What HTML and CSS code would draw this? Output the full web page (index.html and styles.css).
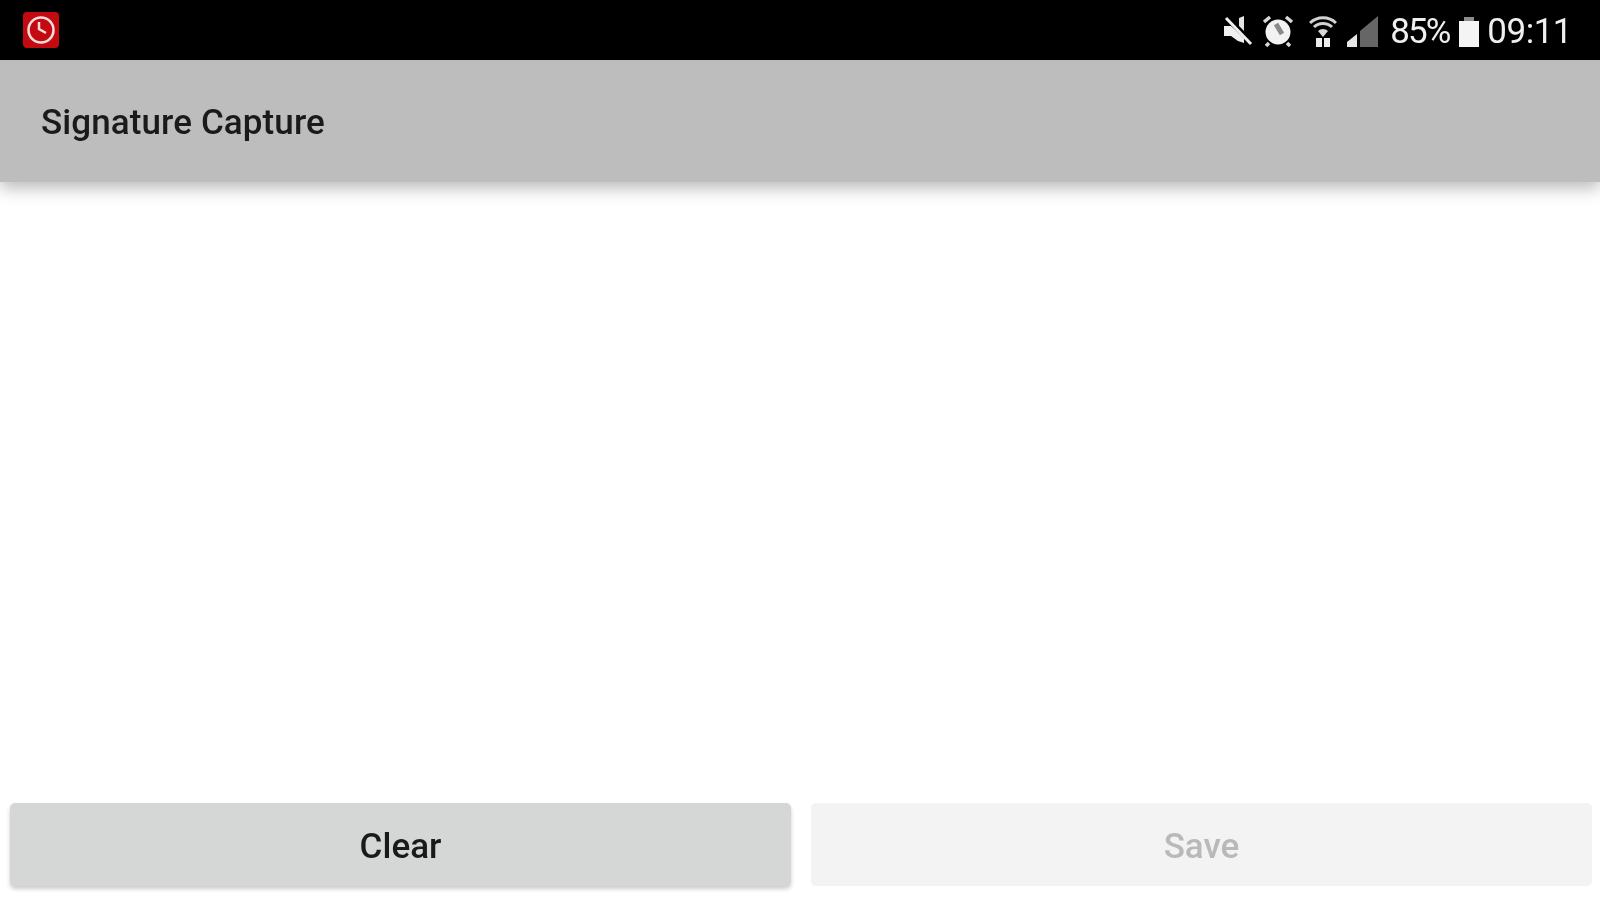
FILE: index.html
```html
<!DOCTYPE html>
<html lang="en">
<head>
  <meta charset="UTF-8" />
  <meta name="viewport" content="width=device-width, initial-scale=1.0"/>
  <title>Signature Capture</title>
  <link rel="stylesheet" href="styles.css">
</head>
<body>

<div class="screen">
  <div class="status-bar">
    <svg class="app-icon" width="36" height="36" viewBox="0 0 36 36">
      <rect width="36" height="36" rx="4" fill="#c30a10"/>
      <circle cx="18" cy="18" r="12.5" fill="none" stroke="#f6dcdc" stroke-width="2.5"/>
      <path d="M16 10v7l7 4" fill="none" stroke="#f6dcdc" stroke-width="2.5"/>
    </svg>

    <div class="status-icons">
      <svg class="icon-mute" width="30" height="32" viewBox="0 0 30 32">
        <path d="M1 11h7l6 5 7 7v5l-6-2-7-5H1z" fill="#f0f0f0"/>
        <path d="M16 3v8l5 5V1z" fill="#e4e4e4"/>
        <path d="M3 2l26 26" stroke="#000" stroke-width="5"/>
        <path d="M3 3l25 26" stroke="#f0f0f0" stroke-width="3"/>
      </svg>
      <svg class="icon-alarm" width="32" height="32" viewBox="0 0 32 32">
        <circle cx="16" cy="17" r="12.5" fill="#f2f2f2"/>
        <path d="M14 9l6 10" stroke="#8a8a8a" stroke-width="5"/>
        <path d="M2 7l6-5M30 7l-6-5M7 28l-3 3M25 28l3 3" stroke="#d8d8d8" stroke-width="3.5"/>
      </svg>
      <svg class="icon-wifi" width="28" height="32" viewBox="0 0 28 32">
        <path d="M1 8a19 19 0 0 1 26 0M5 12a13 13 0 0 1 18 0" fill="none" stroke="#d2d2d2" stroke-width="3"/>
        <path d="M9 16a7 7 0 0 1 10 0l-5 6z" fill="#d8d8d8"/>
        <path d="M7 23h6v9H7zM15 23h6v9h-6z" fill="#ececec"/>
      </svg>
      <svg class="icon-signal" width="32" height="32" viewBox="0 0 32 32">
        <path d="M32 1v31H14V16z" fill="#666"/>
        <path d="M1 32v-5l10-8v13z" fill="#e6e6e6"/>
      </svg>
      <span class="status-text battery-level">85%</span>
      <div class="battery">
        <div class="battery-cap"></div>
        <div class="battery-body"></div>
      </div>
      <span class="status-text">09:11</span>
    </div>
  </div>

  <div class="app-bar">
    <h1>Signature Capture</h1>
  </div>

  <div class="signature-area"></div>

  <div class="buttons">
    <button type="button" class="btn-clear"><span>Clear</span></button>
    <button type="button" class="btn-save" disabled><span>Save</span></button>
  </div>
</div>

</body>
</html>
```

FILE: styles.css
```css
* {
  box-sizing: border-box;
}

body {
  margin: 0;
  background: white;
  font-family: Roboto, "Liberation Sans", sans-serif;
}

.screen {
  display: flex;
  flex-direction: column;
  height: 900px;
  overflow: hidden;
}

.status-bar {
  display: flex;
  align-items: center;
  justify-content: space-between;
  height: 60px;
  padding: 0 28px 0 23px;
  background: black;
  color: #efefef;
}

.app-icon {
  display: block;
  filter: blur(0.6px);
}

.status-icons {
  display: flex;
  align-items: center;
  height: 100%;
  padding-top: 2px;
  filter: blur(0.7px);
}

.icon-mute {
  margin-right: 9px;
}

.icon-alarm {
  margin-right: 15px;
}

.icon-wifi {
  margin-right: 9px;
}

.icon-signal {
  margin-right: 12px;
}

.status-text {
  font-size: 35px;
  letter-spacing: -0.5px;
  padding-top: 1px;
}

.battery-level {
  letter-spacing: -2px;
}

.battery {
  display: flex;
  flex-direction: column;
  align-items: center;
  margin: 1px 8px 0 10px;
}

.battery-cap {
  width: 10px;
  height: 4px;
  background: #8c8c8c;
}

.battery-body {
  width: 20px;
  height: 26px;
  background: #f4f4f4;
}

.app-bar {
  position: relative;
  display: flex;
  align-items: center;
  height: 122px;
  padding: 3px 41px 0;
  background: #bdbdbd;
  box-shadow: 0 6px 16px rgba(0, 0, 0, 0.28);
}

.app-bar h1 {
  margin: 0;
  font-size: 35px;
  font-weight: 500;
  letter-spacing: 0.1px;
  color: #1a1a1a;
  filter: blur(0.6px);
}

.signature-area {
  flex: 1;
}

.buttons {
  display: flex;
  gap: 20px;
  padding: 0 8px 14px 10px;
}

.buttons button {
  flex: 1;
  height: 83px;
  padding-top: 4px;
  border: none;
  border-radius: 5px;
  font-family: inherit;
  font-size: 35px;
  font-weight: 500;
}

.buttons span {
  display: inline-block;
  filter: blur(0.6px);
}

.btn-clear {
  background: #d5d7d7;
  color: #1a1a1a;
  box-shadow: 0 3px 4px rgba(0, 0, 0, 0.2);
}

.btn-save {
  background: #f3f3f3;
  color: #b9b9b9;
}
```
